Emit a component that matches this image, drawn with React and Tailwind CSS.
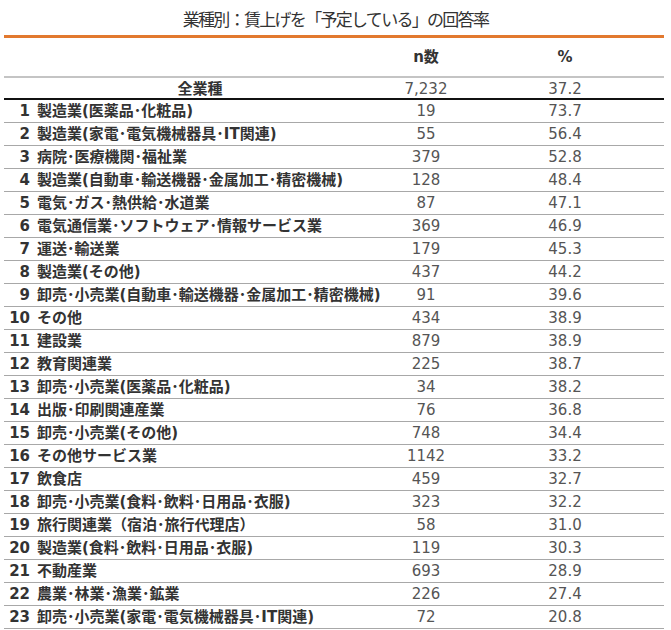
const rows = [
  ["製造業(医薬品･化粧品)", "19", "73.7"],
  ["製造業(家電･電気機械器具･IT関連)", "55", "56.4"],
  ["病院･医療機関･福祉業", "379", "52.8"],
  ["製造業(自動車･輸送機器･金属加工･精密機械)", "128", "48.4"],
  ["電気･ガス･熱供給･水道業", "87", "47.1"],
  ["電気通信業･ソフトウェア･情報サービス業", "369", "46.9"],
  ["運送･輸送業", "179", "45.3"],
  ["製造業(その他)", "437", "44.2"],
  ["卸売･小売業(自動車･輸送機器･金属加工･精密機械)", "91", "39.6"],
  ["その他", "434", "38.9"],
  ["建設業", "879", "38.9"],
  ["教育関連業", "225", "38.7"],
  ["卸売･小売業(医薬品･化粧品)", "34", "38.2"],
  ["出版･印刷関連産業", "76", "36.8"],
  ["卸売･小売業(その他)", "748", "34.4"],
  ["その他サービス業", "1142", "33.2"],
  ["飲食店", "459", "32.7"],
  ["卸売･小売業(食料･飲料･日用品･衣服)", "323", "32.2"],
  ["旅行関連業（宿泊･旅行代理店）", "58", "31.0"],
  ["製造業(食料･飲料･日用品･衣服)", "119", "30.3"],
  ["不動産業", "693", "28.9"],
  ["農業･林業･漁業･鉱業", "226", "27.4"],
  ["卸売･小売業(家電･電気機械器具･IT関連)", "72", "20.8"],
];

export default function App() {
  return (
    <div className="w-[671px] h-[630px] overflow-hidden bg-white text-[#333] font-['DejaVu_Sans','Noto_Sans_CJK_JP',sans-serif]">
      <div className="h-[35px] pt-[3px] flex items-center justify-center text-[17px] tracking-[-1.7px] font-['Noto_Sans_CJK_JP',sans-serif]">
        業種別：賃上げを「予定している」の回答率
      </div>
      <div className="ml-[4px] w-[660px]">
        <div className="h-[3px] bg-[#e2792f]" />
        <div className="h-[40px] grid grid-cols-[344px_156px_122px] items-center border-b-2 border-[#c4c4c4] text-[15px] font-bold">
          <div />
          <div className="text-center">n数</div>
          <div className="text-center">%</div>
        </div>
        <div className="h-[22px] grid grid-cols-[344px_156px_122px] items-center border-b-2 border-[#111] text-[15px]">
          <div className="pl-[48px] text-center font-bold">全業種</div>
          <div className="text-center text-[#555]">7,232</div>
          <div className="text-center text-[#555]">37.2</div>
        </div>
        {rows.map((r, i) => (
          <div
            key={i}
            className="h-[23px] grid grid-cols-[344px_156px_122px] items-center border-b border-[#a8a8a8] text-[15px]"
          >
            <div className="flex items-center font-bold whitespace-nowrap">
              <span className="w-[26px] shrink-0 text-right">{i + 1}</span>
              <span className="ml-[7px] shrink-0">{r[0]}</span>
            </div>
            <div className="text-center text-[#555]">{r[1]}</div>
            <div className="text-center text-[#555]">{r[2]}</div>
          </div>
        ))}
      </div>
    </div>
  );
}
